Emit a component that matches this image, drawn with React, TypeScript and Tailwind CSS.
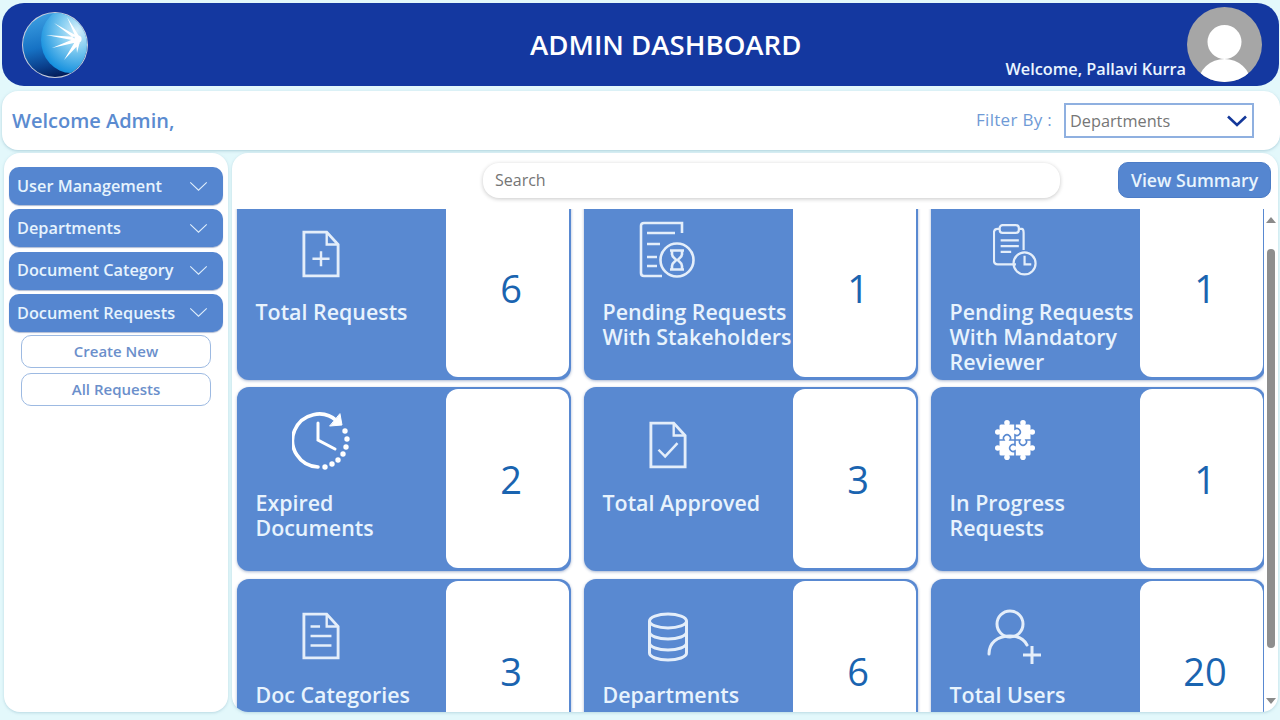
import { ReactNode } from "react";

const Chevron = ({ className }: { className: string }) => (
	<svg viewBox="0 0 20 12" fill="none" stroke="currentColor" className={className}>
		<path d="M1 1.5 L10 10 L19 1.5" />
	</svg>
);

const Logo = () => (
	<svg viewBox="0 0 68 68" className="w-[68px] h-[68px] shrink-0">
		<defs>
			<linearGradient id="base" x1="0.3" y1="0" x2="0.55" y2="1">
				<stop offset="0" stopColor="#3fa2e4" />
				<stop offset="0.5" stopColor="#1672c4" />
				<stop offset="0.78" stopColor="#0a3f8c" />
				<stop offset="1" stopColor="#021650" />
			</linearGradient>
			<radialGradient id="light" cx="0.6" cy="0.36" r="0.66">
				<stop offset="0" stopColor="#d6f0fb" />
				<stop offset="0.42" stopColor="#84cdf1" />
				<stop offset="1" stopColor="#1590de" />
			</radialGradient>
			<clipPath id="globeClip">
				<circle cx="34" cy="34" r="32" />
			</clipPath>
		</defs>
		<circle cx="34" cy="34" r="33" fill="#c9cfdc" />
		<g clipPath="url(#globeClip)">
			<rect width="68" height="68" fill="url(#base)" />
			<ellipse cx="50" cy="29" rx="30" ry="33" fill="url(#light)" />
			<path
				d="M25 24 L56 26 L56 30 Z M33 12 L54 28 L56 25 Z M46 6 L55 27 L58 25 Z M31 37 L55 27 L57 31 Z M43 49 L55 29 L59 32 Z M56 42 L55 30 L59 30 Z"
				fill="#ffffff"
			/>
			<circle cx="57" cy="28" r="3.6" fill="#ffffff" />
		</g>
	</svg>
);

const Avatar = () => (
	<svg viewBox="0 0 75 75" className="w-[75px] h-[75px] shrink-0">
		<defs>
			<clipPath id="avatarClip">
				<circle cx="37.5" cy="37.5" r="37.5" />
			</clipPath>
		</defs>
		<g clipPath="url(#avatarClip)">
			<rect width="75" height="75" fill="#a6a6a6" />
			<circle cx="37.5" cy="35" r="17" fill="#ffffff" />
			<ellipse cx="37.5" cy="76" rx="26" ry="24" fill="#ffffff" />
		</g>
	</svg>
);

const iconProps = {
	fill: "none",
	stroke: "#e4eefa",
	strokeWidth: 2.6,
};

const DocPlus = () => (
	<svg viewBox="0 0 40 50" className="w-[38px] h-[48px]" {...iconProps} strokeWidth={3}>
		<path d="M2 2 H26 L38 15 V48 H2 Z" />
		<path d="M26 2 V15 H38" strokeWidth={2.5} />
		<path d="M20 22 V38 M11 30 H29" strokeWidth={2.6} />
	</svg>
);

const DocHourglass = () => (
	<svg viewBox="0 0 58 58" className="w-[58px] h-[58px]" {...iconProps} strokeWidth={2.6}>
		<path d="M43 12 V2 H5 Q2 2 2 5 V52 Q2 55 5 55 H23" />
		<path d="M8 12 H36 M8 23 H21 M8 36 H18 M8 45 H18" />
		<circle cx="38" cy="39" r="16.5" />
		<path d="M31 29.5 H45 M31 48.5 H45 M33 30 V33 C33 37 37 37.5 37 39 C37 40.5 33 41 33 45 V48 M43 30 V33 C43 37 39 37.5 39 39 C39 40.5 43 41 43 45 V48" />
	</svg>
);

const ClipboardClock = () => (
	<svg viewBox="0 0 46 54" className="w-[44px] h-[52px]" {...iconProps} strokeWidth={2.3}>
		<path d="M24 42 H5 Q1 42 1 38 V9 Q1 5 5 5 H30 Q32 5 32 9 V27" />
		<rect x="7" y="1" width="20" height="8" rx="3" fill="#5989d1" />
		<path d="M8 17 H27 M8 23 H27 M8 29 H19" />
		<circle cx="33" cy="41" r="11.5" />
		<path d="M33 33 V42 H40" />
	</svg>
);

const ClockDots = () => (
	<svg viewBox="0 0 58 58" className="w-[58px] h-[58px]" fill="none" stroke="#ffffff" strokeLinecap="round" strokeWidth={3.6}>
		<path d="M26 55 A26.5 26.5 0 1 1 45 9" />
		<path d="M48 2 L50 13 L38 14 Z" fill="#ffffff" strokeWidth={1} strokeLinejoin="round" />
		<path d="M26 11 V28 L43 37" strokeWidth={3} />
		<g fill="#ffffff" stroke="none">
			<circle cx="53" cy="19" r="2.7" />
			<circle cx="55" cy="27" r="2.7" />
			<circle cx="54" cy="35" r="2.7" />
			<circle cx="51" cy="42" r="2.7" />
			<circle cx="46" cy="48" r="2.7" />
			<circle cx="40" cy="52" r="2.7" />
			<circle cx="33" cy="55" r="2.7" />
		</g>
	</svg>
);

const DocCheck = () => (
	<svg viewBox="0 0 40 50" className="w-[38px] h-[48px]" {...iconProps} strokeWidth={3}>
		<path d="M2 2 H26 L38 15 V48 H2 Z" />
		<path d="M26 2 V15 H38" strokeWidth={2.5} />
		<path d="M10 30 L17 37 L30 23" strokeWidth={2.6} />
	</svg>
);

const Puzzle = () => (
	<svg viewBox="0 0 40 40" className="w-[40px] h-[40px]">
		<rect x="4.5" y="4.5" width="31" height="31" rx="1.5" fill="#ffffff" />
		<g fill="#ffffff">
			<circle cx="12" cy="2.8" r="2.8" />
			<circle cx="28" cy="2.8" r="2.8" />
			<circle cx="12" cy="37.2" r="2.8" />
			<circle cx="28" cy="37.2" r="2.8" />
			<circle cx="2.8" cy="12" r="2.8" />
			<circle cx="2.8" cy="28" r="2.8" />
			<circle cx="37.2" cy="12" r="2.8" />
			<circle cx="37.2" cy="28" r="2.8" />
		</g>
		<path
			d="M20 4 V9 A3.5 3.5 0 1 1 20 15 V25 A3.5 3.5 0 1 0 20 31 V36 M4 20 H9 A3.5 3.5 0 1 1 15 20 H25 A3.5 3.5 0 1 0 31 20 H36"
			fill="none"
			stroke="#5989d1"
			strokeWidth={1.6}
		/>
	</svg>
);

const DocLines = () => (
	<svg viewBox="0 0 40 50" className="w-[38px] h-[48px]" {...iconProps} strokeWidth={3}>
		<path d="M2 2 H26 L38 15 V48 H2 Z" />
		<path d="M26 2 V15 H38" strokeWidth={2.5} />
		<path d="M9 15 H19 M9 25 H31 M9 35 H31" strokeWidth={2.6} />
	</svg>
);

const Database = () => (
	<svg viewBox="0 0 42 50" className="w-[42px] h-[50px]" {...iconProps} strokeWidth={3}>
		<ellipse cx="21" cy="9" rx="18.5" ry="7" />
		<path d="M2.5 9 V41 C2.5 45 11 48 21 48 C31 48 39.5 45 39.5 41 V9" />
		<path d="M2.5 20 C2.5 24 11 27 21 27 C31 27 39.5 24 39.5 20" />
		<path d="M2.5 31 C2.5 35 11 38 21 38 C31 38 39.5 35 39.5 31" />
	</svg>
);

const UserPlus = () => (
	<svg viewBox="0 0 56 56" className="w-[56px] h-[56px]" {...iconProps} strokeWidth={3}>
		<circle cx="23" cy="15" r="13" />
		<path d="M2 45 C2 34 10 27 23 27 C31 27 37 30 40 36" strokeLinecap="round" />
		<path d="M45 37 V55 M36 46 H54" />
	</svg>
);

type CardData = {
	label: string[];
	value: string;
	icon: ReactNode;
	iconClass: string;
};

const cards: CardData[] = [
	{ label: ["Total Requests"], value: "6", icon: <DocPlus />, iconClass: "pt-[34px]" },
	{ label: ["Pending Requests", "With Stakeholders"], value: "1", icon: <DocHourglass />, iconClass: "pt-[25px]" },
	{ label: ["Pending Requests", "With Mandatory", "Reviewer"], value: "1", icon: <ClipboardClock />, iconClass: "pt-[28px]" },
	{ label: ["Expired", "Documents"], value: "2", icon: <ClockDots />, iconClass: "pt-[25px]" },
	{ label: ["Total Approved"], value: "3", icon: <DocCheck />, iconClass: "pt-[34px]" },
	{ label: ["In Progress", "Requests"], value: "1", icon: <Puzzle />, iconClass: "pt-[33px]" },
	{ label: ["Doc Categories"], value: "3", icon: <DocLines />, iconClass: "pt-[33px]" },
	{ label: ["Departments"], value: "6", icon: <Database />, iconClass: "pt-[33px]" },
	{ label: ["Total Users"], value: "20", icon: <UserPlus />, iconClass: "pt-[30px]" },
];

const Card = ({ label, value, icon, iconClass }: CardData) => (
	<div className="w-[334px] h-[184px] flex bg-[#5989d1] rounded-[12px] shadow-[0_1px_3px_rgba(60,90,150,0.45)]">
		<div className="w-[208px] shrink-0">
			<div className={`h-[103px] w-[168px] flex justify-center ${iconClass}`}>
				<div className="h-fit">{icon}</div>
			</div>
			<div className="pl-[18.5px] text-[21.4px] leading-[25px] font-semibold text-[#e8f3fd] whitespace-nowrap">
				{label.map((line) => (
					<div key={line}>{line}</div>
				))}
			</div>
		</div>
		<div className="ml-auto mt-[2px] mb-[3px] mr-[2px] w-[123px] rounded-[12px] bg-white flex items-center justify-center pl-[7px] pt-[2px] text-[38px] text-[#1a64b0]">
			{value}
		</div>
	</div>
);

const sideItems = ["User Management", "Departments", "Document Category", "Document Requests"];

export default function App() {
	return (
		<div className="w-screen h-screen overflow-hidden bg-[#e3f8fb] pt-[3px] font-['Open_Sans',sans-serif]">
			<header className="ml-[2px] mr-[1px] h-[83px] rounded-[22px] bg-[#1438a0] flex items-center">
				<div className="ml-[19px]">
					<Logo />
				</div>
				<h1 className="ml-[441px] text-[27.6px] font-semibold text-white whitespace-nowrap">ADMIN DASHBOARD</h1>
				<span className="ml-auto self-end mb-[5px] mr-[1px] text-[16.3px] font-semibold text-[#eaf5ff] whitespace-nowrap">
					Welcome, Pallavi Kurra
				</span>
				<div className="mr-[17px]">
					<Avatar />
				</div>
			</header>

			<section className="mt-[5px] ml-[2px] h-[59px] rounded-[16px] bg-white shadow-[0_1px_3px_rgba(120,170,190,0.5)] flex items-center pl-[10px]">
				<span className="text-[20px] font-semibold text-[#5b8bd0] mt-[1px]">Welcome Admin,</span>
				<span className="ml-auto text-[17px] text-[#6f9ad6] tracking-[0.3px] mb-[2px]">Filter By :</span>
				<div className="ml-[12px] mr-[26px] w-[190px] h-[35px] border-2 border-[#8fb0e0] flex items-center justify-between pl-[4px] pr-[5px]">
					<span className="text-[16.3px] text-[#767676] mt-[1px]">Departments</span>
					<Chevron className="w-[20px] h-[12px] text-[#14389a] stroke-[2.6]" />
				</div>
			</section>

			<div className="mt-[3px] ml-[4px] flex gap-[4px] h-[559px]">
				<aside className="w-[224px] rounded-[16px] bg-white pt-[14px] px-[5px] shadow-[0_1px_3px_rgba(120,170,190,0.4)]">
					<div className="flex flex-col gap-[4.3px]">
						{sideItems.map((item) => (
							<div
								key={item}
								className="h-[38px] rounded-[10px] bg-[#5586d0] flex items-center justify-between pl-[8px] pr-[15px] text-[16.3px] font-semibold text-[#e6f3fd] whitespace-nowrap shadow-[0_1px_1px_rgba(60,90,150,0.4)]"
							>
								{item}
								<Chevron className="w-[19px] h-[11px] text-[#dfeefb] stroke-[1.2]" />
							</div>
						))}
					</div>
					<div className="mt-[3px] mx-[12px] flex flex-col gap-[5px]">
						<div className="h-[33px] rounded-[10px] border border-[#9dbae2] flex items-center justify-center text-[15px] font-semibold text-[#6b8fcb]">
							Create New
						</div>
						<div className="h-[33px] rounded-[10px] border border-[#9dbae2] flex items-center justify-center text-[15px] font-semibold text-[#6b8fcb]">
							All Requests
						</div>
					</div>
				</aside>

				<main className="w-[1046px] rounded-[16px] bg-white overflow-hidden flex flex-col shadow-[0_1px_3px_rgba(120,170,190,0.4)]">
					<div className="h-[56px] shrink-0 flex items-start pt-[9px]">
						<div className="ml-[251px] mt-[1px] w-[577px] h-[35px] rounded-[16px] bg-white shadow-[0_1px_4px_rgba(0,0,0,0.22)] flex items-center pl-[12px] pb-[2px] text-[16px] text-[#757575]">
							Search
						</div>
						<div className="ml-[58px] w-[153px] h-[36px] rounded-[10px] bg-[#5586d0] border border-[#4c7cc6] flex items-center justify-center text-[17.7px] font-semibold text-[#e8f4fd]">
							View Summary
						</div>
					</div>
					<div className="flex-1 min-h-0 flex overflow-hidden">
						<div className="w-[1032px] pl-[5px] overflow-hidden">
							<div className="-mt-[13.5px] grid grid-cols-[334px_334px_334px] gap-x-[13px] gap-y-[7.5px]">
								{cards.map((card) => (
									<Card key={card.label.join(" ")} {...card} />
								))}
							</div>
						</div>
						<div className="w-[14px] flex flex-col items-center">
							<svg viewBox="0 0 10 6" className="w-[10px] h-[6px] mt-[8px]">
								<path d="M5 0 L10 6 H0 Z" fill="#8a8a8a" />
							</svg>
							<div className="mt-[26px] w-[8px] h-[399px] rounded-full bg-[#8e8e8e]" />
							<svg viewBox="0 0 10 6" className="w-[10px] h-[6px] mt-[50px]">
								<path d="M0 0 H10 L5 6 Z" fill="#8a8a8a" />
							</svg>
						</div>
					</div>
				</main>
			</div>
		</div>
	);
}
